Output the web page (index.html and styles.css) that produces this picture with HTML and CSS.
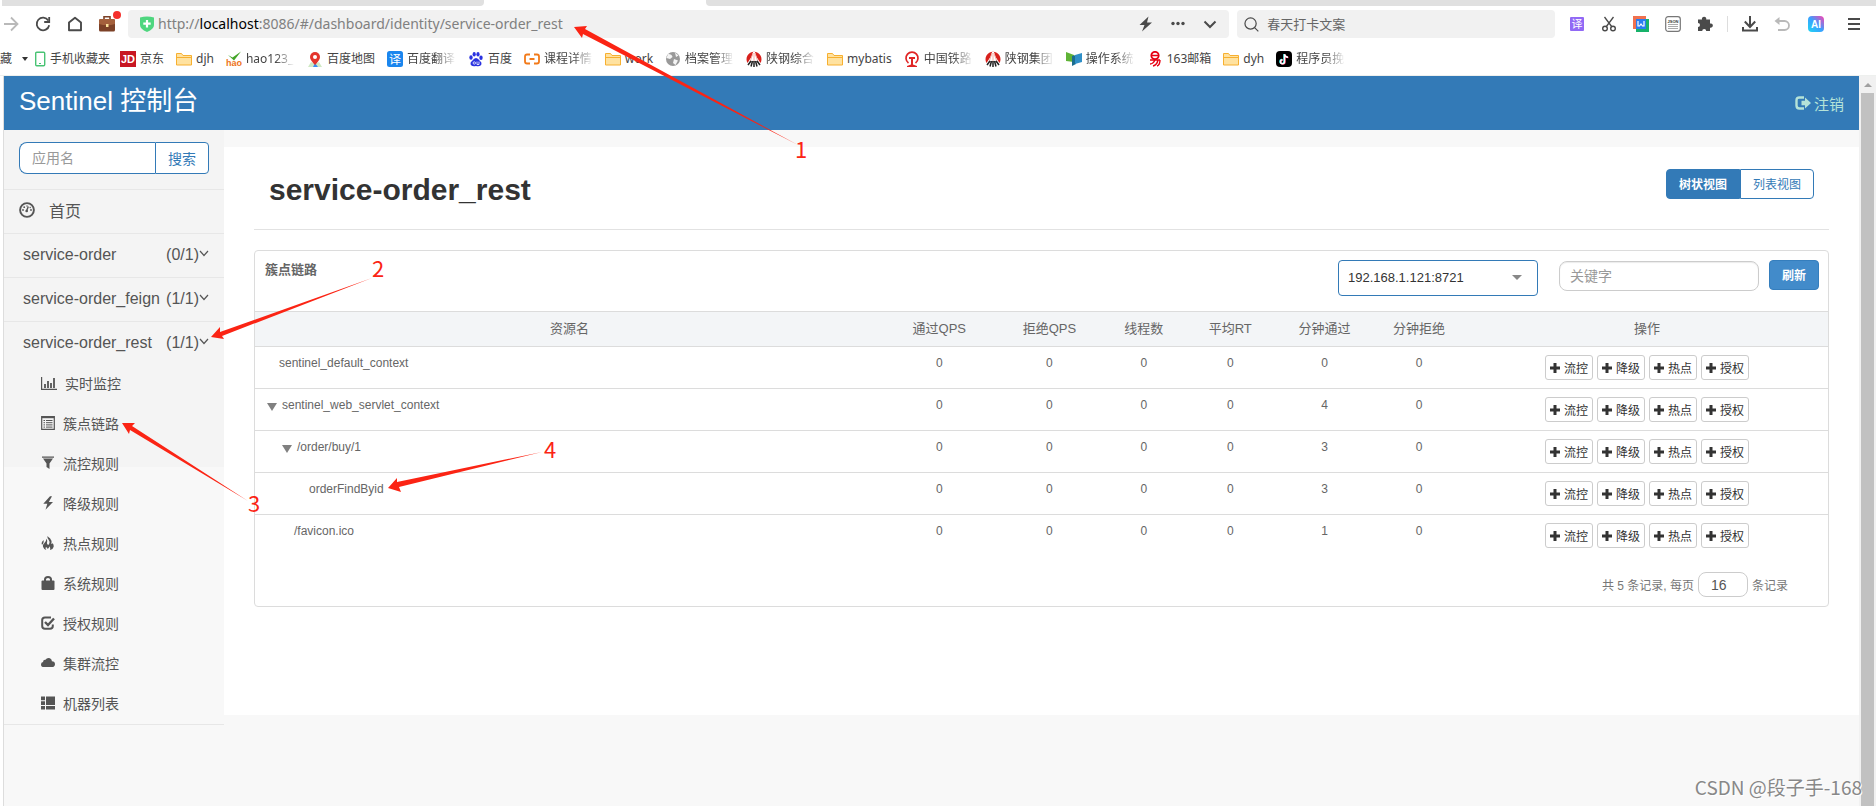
FILE: index.html
```html
<!DOCTYPE html>
<html lang="zh-CN">
<head>
<meta charset="utf-8">
<title>Sentinel 控制台</title>
<link rel="stylesheet" href="styles.css">
</head>
<body>
<svg class="defs" width="0" height="0" aria-hidden="true">
  <symbol id="folder" viewBox="0 0 16 16"><path d="M.5 2.500h5l1.500 2h8.500v9.500H.5z" fill="#ffe2a0" stroke="#f7b030"/><path d="M.5 6.500h15" stroke="#f7b030" fill="none"/></symbol>
  <symbol id="plus" viewBox="0 0 10 10"><path d="M3.500 0h3v3.500H10v3H6.500V10h-3V6.500H0v-3h3.500z" fill="#333"/></symbol>
  <symbol id="steel" viewBox="0 0 16 16"><path d="M1.500 12A7.500 7.500 0 1 1 14.500 12L10 5 9 1H7L6 5z" fill="#d8201c"/><path d="M7 2 4 11M8 2v9M9 2l3 9" stroke="#f6b0a8" fill="none"/><path d="m5 10-3 4M6.500 10 5 15.500M8 10v6M9.500 10l1.500 5.500M11 10l3 4" stroke="#222" stroke-width="1.500" fill="none"/></symbol>
  <symbol id="chev" viewBox="0 0 10 10"><path d="m1 2 4 4.500L9 2" fill="none" stroke="#555" stroke-width="1.200"/></symbol>
</svg>

<div class="tabstrip"><span class="tabs-left"></span><span class="tab-active"></span><span class="tabs-right"></span></div>

<div class="toolbar">
  <div class="tools">
    <button class="tool" aria-label="前进"><svg viewBox="0 0 16 16"><path d="M1 8h13M8 1.500 14.500 8 8 14.500" fill="none" stroke="#b9b9b9" stroke-width="1.800"/></svg></button>
    <button class="tool" aria-label="刷新"><svg viewBox="0 0 16 16"><path d="M13.300 4.500A6.300 6.300 0 1 0 14.200 9.200" fill="none" stroke="#4a4a4a" stroke-width="1.800"/><path d="M14.200 1v5H9.200" fill="none" stroke="#4a4a4a" stroke-width="1.800"/></svg></button>
    <button class="tool" aria-label="主页"><svg viewBox="0 0 16 16"><path d="M2 6.500 8 1.800l6 4.700v7.700H2z" fill="none" stroke="#4a4a4a" stroke-width="1.900" stroke-linejoin="round"/></svg></button>
    <button class="tool" aria-label="工具箱"><svg viewBox="0 0 16 16"><path d="M5 3V.8h6V3" fill="none" stroke="#7c4127" stroke-width="1.600"/><rect y="3" width="16" height="12.500" rx="1.500" fill="#7c4127"/><path d="M0 4.500Q0 3 1.500 3h13Q16 3 16 4.500V8Q8 10.500 0 8z" fill="#a4603c"/><rect x="7" y="8" width="2.500" height="3" fill="#fbe29a"/></svg><i class="dot"></i></button>
  </div>
  <div class="address" role="textbox" aria-label="地址">
    <svg class="shield" viewBox="0 0 14 16"><path d="M0 1.500Q7-.5 14 1.500V9q0 4-7 7-7-3-7-7z" fill="#4fd67f"/><path d="M7 4v7.500M3.300 7.700h7.400" stroke="#fff" stroke-width="2.200"/></svg>
    <span class="url">http://<b>localhost</b>:8086/#/dashboard/identity/service-order_rest</span>
    <button class="tool" aria-label="极速模式"><svg viewBox="0 0 16 16"><path d="m10.500.5-9 8.500h5L4 15.500l10-9H9z" fill="#4a4a4a"/></svg></button>
    <button class="tool" aria-label="更多"><svg viewBox="0 0 16 16"><g fill="#4a4a4a"><circle cx="3" cy="7.500" r="1.700"/><circle cx="8" cy="7.500" r="1.700"/><circle cx="13" cy="7.500" r="1.700"/></g></svg></button>
    <button class="tool" aria-label="展开"><svg viewBox="0 0 16 16"><path d="m2.500 5.500 5.500 5.500 5.500-5.500" fill="none" stroke="#4a4a4a" stroke-width="2"/></svg></button>
  </div>
  <label class="websearch">
    <svg viewBox="0 0 16 16"><circle cx="7" cy="7" r="6" fill="none" stroke="#4a4a4a" stroke-width="1.300"/><path d="m11.300 11.300 4 4" stroke="#4a4a4a" stroke-width="1.300"/></svg>
    <input type="text" value="春天打卡文案" aria-label="网页搜索">
  </label>
  <div class="tools tools-right">
    <button class="tool" aria-label="翻译"><svg viewBox="0 0 16 16"><rect x="1" y="1" width="14" height="14" rx="1" fill="#9169f5"/><text x="8" y="12" class="ico-cjk" font-size="11" fill="#fff">译</text></svg></button>
    <button class="tool" aria-label="截图"><svg viewBox="0 0 16 16"><path d="M3.500 1 11 11M12.500 1 5 11" stroke="#4a4a4a" stroke-width="1.300" fill="none"/><circle cx="4" cy="12.500" r="2.300" fill="none" stroke="#4a4a4a" stroke-width="1.400"/><circle cx="12" cy="12.500" r="2.300" fill="none" stroke="#4a4a4a" stroke-width="1.400"/></svg></button>
    <button class="tool" aria-label="文档"><svg viewBox="0 0 16 16"><path d="M0 0h13v13H0z" fill="#f0714f"/><path d="M3 3h13v13H3z" fill="#17b26a"/><path d="M3 3h10v10H3z" fill="#2a7cf0"/><path d="M5 5v5h1.500L8 8l1.500 2H11V5" fill="none" stroke="#fff" stroke-width="1.200"/></svg></button>
    <button class="tool" aria-label="JSON"><svg viewBox="0 0 16 16"><rect x=".7" y=".7" width="14.600" height="14.600" rx="2.500" fill="none" stroke="#777" stroke-width="1.200"/><text x="8" y="6.500" class="ico-txt" font-size="4" fill="#333">JSON</text><path d="M3 8.500h10M3 10.500h10M3 12.500h10" stroke="#aaa" stroke-width="1.200"/></svg></button>
    <button class="tool" aria-label="扩展"><svg viewBox="0 0 16 16"><path d="M1 3.500h4a2.200 2.200 0 1 1 4.200 0H13v4a2.200 2.200 0 1 1 0 4.200V15H9.200a2 2 0 1 0-4 0H1v-4a2 2 0 1 0 0-4z" fill="#4a4a4a"/></svg></button>
    <span class="sep"></span>
    <button class="tool" aria-label="下载"><svg viewBox="0 0 16 16"><path d="M8 0v11M2.800 5.500 8 11l5.200-5.500M1 11v3.500h14V11" fill="none" stroke="#4a4a4a" stroke-width="2"/></svg></button>
    <button class="tool" aria-label="恢复"><svg viewBox="0 0 16 16"><path d="M3 5h7.500a4.500 4.500 0 0 1 0 9H4" fill="none" stroke="#b9b9b9" stroke-width="1.800"/><path d="M5.500 1v8L.5 5z" fill="#b9b9b9"/></svg></button>
    <button class="tool ai" aria-label="AI 助手"><svg viewBox="0 0 16 16"><defs><linearGradient id="aig" x1="0" y1="1" x2="1" y2="0"><stop offset="0" stop-color="#1fd6f2"/><stop offset=".5" stop-color="#3aa0ff"/><stop offset="1" stop-color="#ff3fb0"/></linearGradient></defs><rect width="16" height="16" rx="4" fill="url(#aig)"/><text x="8" y="12" class="ico-txt" font-size="10" fill="#fff">AI</text></svg></button>
    <button class="tool menu" aria-label="菜单"><svg viewBox="0 0 16 16"><path d="M2 3h12M2 8h12M2 13h12" stroke="#4a4a4a" stroke-width="2"/></svg></button>
  </div>
</div>

<nav class="bookmarks" aria-label="书签">
  <span class="fav">藏</span><svg class="down" viewBox="0 0 6 4"><path d="M0 0h6L3 4z" fill="#333"/></svg>
  <a class="bm phone" href="#"><svg viewBox="2 0 12 16"><rect x="3.700" y="1.200" width="9" height="13.600" rx="1" fill="#fff" stroke="#49c374" stroke-width="1.400"/><path d="M7 12.500h2" stroke="#49c374"/></svg><span>手机收藏夹</span></a>
  <a class="bm" href="#"><svg viewBox="0 0 16 16"><path d="M0 0h16v16H0z" fill="#c81623"/><text x="8" y="12" class="ico-txt" font-size="11" fill="#fff">JD</text></svg><span>京东</span></a>
  <a class="bm" href="#"><svg><use href="#folder"/></svg><span>djh</span></a>
  <a class="bm" href="#"><svg viewBox="0 0 16 16"><path d="m2 4 4.500 2.500L15 .5 8 9.500z" fill="#43a528"/><text x="8" y="15" class="ico-txt" font-size="9" fill="#ee7320">hao</text></svg><span class="cut">hao123_</span></a>
  <a class="bm" href="#"><svg viewBox="0 0 16 16"><path d="m1 16 3-5 4 2 4-2 3 5z" fill="#cfe9c4"/><path d="m6 16 2-4 3 4z" fill="#3b8df2"/><path d="M8 14Q3 9 3 6a5 5 0 1 1 10 0q0 3-5 8" fill="#e4342b"/><circle cx="8" cy="6" r="2" fill="#fff"/></svg><span>百度地图</span></a>
  <a class="bm" href="#"><svg viewBox="0 0 16 16"><rect width="16" height="16" rx="2.500" fill="#1a86ee"/><text x="8" y="12.500" class="ico-cjk" font-size="12" fill="#fff">译</text></svg><span class="cut">百度翻译</span></a>
  <a class="bm" href="#"><svg viewBox="0 0 16 16"><g fill="#2a32e0"><ellipse cx="3" cy="6.500" rx="1.700" ry="2.200"/><ellipse cx="6.200" cy="3.200" rx="1.600" ry="2.200"/><ellipse cx="10" cy="3.200" rx="1.600" ry="2.200"/><ellipse cx="13" cy="6.800" rx="1.700" ry="2.200"/><path d="M8 7q2 0 3.500 2.500Q14 11 13.500 13.300 12.500 16 8 15q-4.500 1-5.500-1.700Q2 11 4.500 9.500 6 7 8 7"/></g><circle cx="6.300" cy="12" r="1.200" fill="none" stroke="#fff" stroke-width=".8"/><path d="M9 10.500v3h2v-3" fill="none" stroke="#fff" stroke-width=".8"/></svg><span>百度</span></a>
  <a class="bm" href="#"><svg viewBox="0 0 16 16"><path d="M6 3.500H3Q1 3.500 1 5.500v5q0 2 2 2h3M10 3.500h3q2 0 2 2v5q0 2-2 2h-3M5.500 8h5" fill="none" stroke="#f27a1a" stroke-width="1.800"/></svg><span class="cut">课程详情</span></a>
  <a class="bm" href="#"><svg><use href="#folder"/></svg><span>work</span></a>
  <a class="bm" href="#"><svg viewBox="0 0 16 16"><circle cx="8" cy="8" r="7" fill="#999"/><path d="M3 3q4 0 4.500 3L5 8 1.500 7zM9 8l4 1.500-2.500 4.500L8 12zM10 1.500l3.500 3L11 6z" fill="#f4f4f4"/></svg><span class="cut">档案管理</span></a>
  <a class="bm" href="#"><svg><use href="#steel"/></svg><span class="cut">陕钢综合</span></a>
  <a class="bm" href="#"><svg><use href="#folder"/></svg><span>mybatis</span></a>
  <a class="bm" href="#"><svg viewBox="0 0 16 16"><path d="M4.500 12A6 6 0 1 1 11.500 12" fill="none" stroke="#e02424" stroke-width="1.700"/><path d="M5 6h6v2H9v5.500l4 1.500v1H3v-1l4-1.500V8H5z" fill="#e02424"/></svg><span class="cut">中国铁路</span></a>
  <a class="bm" href="#"><svg><use href="#steel"/></svg><span class="cut">陕钢集团</span></a>
  <a class="bm" href="#"><svg viewBox="0 0 16 16"><path d="m0 1 8 3v7L0 10z" fill="#5fb336"/><path d="m6 5 4-1v9l-4 2z" fill="#1b6d8f"/><path d="m9 4 7-2v9l-7 2z" fill="#2f8fc8"/></svg><span class="cut">操作系统</span></a>
  <a class="bm" href="#"><svg viewBox="0 0 16 16"><circle cx="8" cy="4.500" r="3.700" fill="none" stroke="#e60012" stroke-width="1.800"/><path d="M5 4.500h6M3 9h10M3 13q3 0 5-4M6 15q4-1 5-6M10 15q3-1 3-6" fill="none" stroke="#e60012" stroke-width="1.400"/></svg><span>163邮箱</span></a>
  <a class="bm" href="#"><svg><use href="#folder"/></svg><span>dyh</span></a>
  <a class="bm" href="#"><svg viewBox="0 0 16 16"><rect width="16" height="16" rx="4" fill="#000"/><g fill="none" stroke-width="1.500"><path d="M8 3v7.500a2 2 0 1 1-2-2M8 3q.5 3 3.500 3" stroke="#25f4ee"/><path d="M9 3.500V11a2 2 0 1 1-2-2M9 3.500q.5 3 3.500 3" stroke="#fe2c55"/><path d="M8.500 3.200v7.600a2 2 0 1 1-2-2M8.500 3.200q.5 3 3.500 3" stroke="#fff"/></g></svg><span class="cut">程序员挽</span></a>
</nav>

<div class="viewport">
  <div class="page">
    <header class="navbar">
      <a class="brand" href="#">Sentinel 控制台</a>
      <a class="logout" href="#"><svg viewBox="0 0 16 14"><path d="M9 1.500H4.500Q1.500 1.500 1.500 4.500v5q0 3 3 3H9" fill="none" stroke="currentColor" stroke-width="2.400"/><path d="M6.500 4.800H10V1.500l6 5.500-6 5.500V9.200H6.500z" fill="currentColor"/></svg>注销</a>
    </header>
    <div class="columns">
      <aside class="sidebar">
        <form class="appsearch">
          <input type="text" placeholder="应用名" aria-label="应用名">
          <button type="button">搜索</button>
        </form>
        <a class="side-item home" href="#"><svg viewBox="0 0 16 16"><circle cx="8" cy="8" r="6.900" fill="none" stroke="#555" stroke-width="1.900"/><path d="m7.300 9.500 2-5" stroke="#555" stroke-width="1.400"/><circle cx="7.700" cy="9" r="1.300" fill="#555"/><g fill="#555"><circle cx="4" cy="8" r=".9"/><circle cx="5.200" cy="5.200" r=".9"/><circle cx="8" cy="4" r=".7"/><circle cx="12" cy="8" r=".9"/><circle cx="11.200" cy="5.500" r=".7"/></g></svg>首页</a>
        <a class="side-item" href="#">service-order<span class="count">(0/1)</span><svg class="chev"><use href="#chev"/></svg></a>
        <a class="side-item" href="#">service-order_feign<span class="count">(1/1)</span><svg class="chev"><use href="#chev"/></svg></a>
        <a class="side-item" href="#">service-order_rest<span class="count">(1/1)</span><svg class="chev"><use href="#chev"/></svg></a>
        <ul class="submenu">
          <li><a href="#"><svg class="wide" viewBox="0 0 16 14"><path d="M.6 1v12.400H16" fill="none" stroke="#555" stroke-width="1.200"/><path d="M4 12V8M7 12V5M10 12V7M13 12V2" stroke="#555" stroke-width="1.800"/></svg>实时监控</a></li>
          <li><a href="#"><svg viewBox="0 0 14 14"><path d="M.7.7h12.600v12.600H.7z" fill="none" stroke="#555" stroke-width="1.200"/><path d="M.5 1.200h13" stroke="#555" stroke-width="2"/><path d="M2.500 4.500H4M2.500 6.700H4M2.500 8.900H4M2.500 11.100H4M5 4.500h6.500M5 6.700h6.500M5 8.900h6.500M5 11.100h6.500" stroke="#555"/></svg>簇点链路</a></li>
          <li><a href="#"><svg viewBox="0 0 14 14"><path d="M1 .5h12v1.300H1zM2 2.500h10L8.500 7.500V13L5.500 11V7.500z" fill="#555"/></svg>流控规则</a></li>
          <li><a href="#"><svg viewBox="0 0 14 14"><path d="M9 .3 2.300 7.800h4L4.500 13.800 12 6H7.800L11 .3z" fill="#555"/></svg>降级规则</a></li>
          <li><a href="#"><svg viewBox="0 0 14 14"><path d="M6.500 0Q6 2 7.600 3.800 9.400 6 8 8.200 7 9.300 6.300 8.300 5.600 7 6.200 5.400 6.300 3.800 5.400 2.800 5.300 5 3.800 6.500 1.600 8.500 2 10.800 2.700 13.300 5.300 14 4 12.300 4.900 10.900 6.300 11.500 6.700 13 8.300 12 8.200 10.300 9.900 11.800 9 14q3.200-.7 3.700-3.300.3-2.200-1.200-3.700Q11.300 8.300 10.400 8 11 4 9 2.200 7.500 1.200 6.500 0M2.600 4Q.2 5.800.6 8q.8 1.200 1.500-.3.900-1.700.5-3.700" fill="#555"/></svg>热点规则</a></li>
          <li><a href="#"><svg viewBox="0 0 14 14"><path d="M4 6V3.500Q4 1 7 1t3 2.500V6" fill="none" stroke="#555" stroke-width="2"/><rect x=".5" y="4.500" width="13" height="9.500" rx="1" fill="#555"/></svg>系统规则</a></li>
          <li><a href="#"><svg viewBox="0 0 14 14"><path d="M10 1.500H4Q1.200 1.500 1.200 4v6q0 2.800 2.800 2.800h5q2.800 0 2.800-2.800V8.500" fill="none" stroke="#555" stroke-width="2"/><path d="m4 6 3 3 6-6.500" fill="none" stroke="#555" stroke-width="2.400"/></svg>授权规则</a></li>
          <li><a href="#"><svg viewBox="0 0 14 14"><path d="M3 11Q0 11 0 8.400 0 6.300 2 6 2.200 3.500 4.500 3.800 5.500 2 7.600 2q2.900.2 3.300 3.200Q14 5.300 14 8.200 13.800 11 11 11z" fill="#555"/></svg>集群流控</a></li>
          <li><a href="#"><svg viewBox="0 0 14 14"><path d="M0 .5h4v3.700H0zM0 5.200h4v3.700H0zM0 9.900h4v3.700H0zM5 .5h9v8.400H5zM5 9.900h9v3.700H5z" fill="#555"/></svg>机器列表</a></li>
        </ul>
      </aside>

      <main class="content">
        <div class="title-row">
          <h1>service-order_rest</h1>
          <div class="toggle"><button class="on">树状视图</button><button>列表视图</button></div>
        </div>
        <section class="card">
          <div class="card-head">
            <h2>簇点链路</h2>
            <div class="picker">
              <select aria-label="机器"><option>192.168.1.121:8721</option></select>
              <svg viewBox="0 0 10 5"><path d="M0 0h10L5 5z" fill="#888"/></svg>
            </div>
            <input class="keyword" type="text" placeholder="关键字" aria-label="关键字">
            <button class="refresh">刷新</button>
          </div>
          <table>
            <colgroup><col class="c-name"><col class="c7"><col class="c7"><col class="c5"><col class="c6"><col class="c6"><col class="c6"><col class="c-ops"></colgroup>
            <thead><tr><th>资源名</th><th>通过QPS</th><th>拒绝QPS</th><th>线程数</th><th>平均RT</th><th>分钟通过</th><th>分钟拒绝</th><th>操作</th></tr></thead>
            <tbody>
              <tr><td class="name in-24">sentinel_default_context</td><td>0</td><td>0</td><td>0</td><td>0</td><td>0</td><td>0</td><td><div class="ops"><button><svg><use href="#plus"/></svg>流控</button><button><svg><use href="#plus"/></svg>降级</button><button><svg><use href="#plus"/></svg>热点</button><button><svg><use href="#plus"/></svg>授权</button></div></td></tr>
              <tr><td class="name in-12"><i class="tri"></i>sentinel_web_servlet_context</td><td>0</td><td>0</td><td>0</td><td>0</td><td>4</td><td>0</td><td><div class="ops"><button><svg><use href="#plus"/></svg>流控</button><button><svg><use href="#plus"/></svg>降级</button><button><svg><use href="#plus"/></svg>热点</button><button><svg><use href="#plus"/></svg>授权</button></div></td></tr>
              <tr><td class="name in-27"><i class="tri"></i>/order/buy/1</td><td>0</td><td>0</td><td>0</td><td>0</td><td>3</td><td>0</td><td><div class="ops"><button><svg><use href="#plus"/></svg>流控</button><button><svg><use href="#plus"/></svg>降级</button><button><svg><use href="#plus"/></svg>热点</button><button><svg><use href="#plus"/></svg>授权</button></div></td></tr>
              <tr><td class="name in-54">orderFindByid</td><td>0</td><td>0</td><td>0</td><td>0</td><td>3</td><td>0</td><td><div class="ops"><button><svg><use href="#plus"/></svg>流控</button><button><svg><use href="#plus"/></svg>降级</button><button><svg><use href="#plus"/></svg>热点</button><button><svg><use href="#plus"/></svg>授权</button></div></td></tr>
              <tr><td class="name in-39">/favicon.ico</td><td>0</td><td>0</td><td>0</td><td>0</td><td>1</td><td>0</td><td><div class="ops"><button><svg><use href="#plus"/></svg>流控</button><button><svg><use href="#plus"/></svg>降级</button><button><svg><use href="#plus"/></svg>热点</button><button><svg><use href="#plus"/></svg>授权</button></div></td></tr>
            </tbody>
          </table>
          <div class="pager"><span>共 5 条记录, 每页</span><input type="text" value="16" aria-label="每页条数"><span>条记录</span></div>
        </section>
      </main>
    </div>
  </div>
  <div class="scrollbar" aria-hidden="true"><svg viewBox="0 0 8 4"><path d="M0 4h8L4 0z" fill="#a0a0a0"/></svg><span class="thumb"></span></div>
</div>

<svg class="notes" width="1876" height="806" viewBox="0 0 1876 806">
  <g fill="#fb2414">
    <path d="M574 27l13-1-2 3 213 116L583 34l-1 4z"/>
    <path d="M211 337l9-10v5l152-54-150 58 2 3z"/>
    <path d="M122 423l13 0-3 3 116 75-118-71-1 4z"/>
    <path d="M388 488l9-10v4l145-30-143 35 2 5z"/>
    <text x="795" y="158">1</text><text x="372" y="277">2</text><text x="248" y="512">3</text><text x="544" y="458">4</text>
  </g>
</svg>
<div class="watermark">CSDN @段子手-168</div>
</body>
</html>
```
FILE: styles.css
```css
* { box-sizing: border-box; }

body {
  margin: 0;
  height: 100vh;
  display: flex;
  flex-direction: column;
  overflow: hidden;
  background: #fff;
  color: #555;
  font-family: "Liberation Sans", "Noto Sans CJK SC", sans-serif;
  font-size: 14px;
}
a { color: inherit; text-decoration: none; }
button, input, select { font-family: inherit; margin: 0; }
button { background: none; border: 0; padding: 0; color: inherit; cursor: pointer; }
svg { display: block; flex: none; }
.defs { position: absolute; }
.ico-txt { font-family: "Liberation Sans", sans-serif; font-weight: bold; text-anchor: middle; }
.ico-cjk { font-family: "Noto Sans CJK SC", sans-serif; text-anchor: middle; }

/* browser chrome */
.tabstrip { display: flex; height: 6px; flex: none; margin-left: 2px; }
.tabs-left { flex: 482; background: #e0e0e0; border-bottom-right-radius: 4px; }
.tab-active { flex: 222; }
.tabs-right { flex: 1170; background: #e0e0e0; border-bottom-left-radius: 4px; }

.toolbar { display: flex; align-items: center; flex: none; height: 36px; padding: 0 14px 0 3px; }
.tools { display: flex; align-items: center; gap: 16px; }
.tools-right { margin-left: 14px; }
.tool { position: relative; width: 16px; height: 16px; }
.tool svg { width: 16px; height: 16px; }
.dot { position: absolute; top: -5px; right: -6px; width: 8px; height: 8px; border-radius: 50%; background: #f5302c; }
.sep { width: 1px; height: 16px; background: #ddd; margin: 0 -2px; }
.tool.ai { margin-left: 2px; }
.tool.menu { margin-left: 6px; }
.address, .websearch { display: flex; align-items: center; height: 28px; background: #f1f1f1; border-radius: 4px; }
.address { flex: 1079; margin-left: 13px; padding: 0 11px 0 12px; gap: 16px; }
.shield { width: 14px; height: 16px; margin-right: -12px; }
.url { flex: 1; font: 14px/28px "Noto Sans", sans-serif; color: #808080; white-space: nowrap; }
.url b { color: #000; font-weight: normal; }
.websearch { flex: 304; margin-left: 8px; padding: 0 7px; gap: 8px; }
.websearch svg { width: 15px; height: 15px; }
.websearch input { flex: 1; min-width: 0; border: 0; padding: 0 0 2px; background: none; font-size: 13px; color: #666; outline: 0; }

.bookmarks {
  display: flex; align-items: center; flex: none; height: 34px; gap: 12px;
  border-bottom: 1px solid #eef0ee; font: 12px/18px "Noto Sans", "Noto Sans CJK SC", sans-serif; color: #444; white-space: nowrap;
}
.fav { margin-right: -2px; }
.down { width: 6px; height: 4px; margin-right: -6px; }
.bm { display: flex; align-items: center; gap: 4px; }
.bm svg { width: 16px; height: 16px; }
.phone { margin-right: -2px; }
.phone svg { width: 12px; }
.cut {
  width: 49px; overflow: hidden;
  -webkit-mask-image: linear-gradient(90deg, #000 60%, transparent);
  mask-image: linear-gradient(90deg, #000 60%, transparent);
}

/* web page */
.viewport { display: flex; flex: 1; min-height: 0; margin-left: 3px; border-left: 1px solid #ddd; }
.page { flex: 1; min-width: 0; overflow: hidden; background: #f8f8f8; }
.scrollbar { width: 17px; flex: none; background: #f1f1f1; display: flex; flex-direction: column; align-items: center; padding-top: 7px; gap: 6px; }
.scrollbar svg { width: 8px; height: 4px; }
.thumb { flex: 1; width: 13px; background: #c1c1c1; }

.navbar { display: flex; justify-content: space-between; align-items: center; height: 54px; padding: 0 15px; background: #337ab7; }
.brand { color: #fff; font-size: 26px; line-height: 46px; padding-bottom: 4px; }
.logout { display: flex; align-items: center; gap: 3px; color: #b5e3d8; font-size: 15px; }
.logout svg { width: 16px; height: 14px; }

.columns { display: flex; align-items: flex-start; }
.sidebar { width: 220px; flex: none; border-bottom: 1px solid #e7e7e7; background: linear-gradient(#f4f4f4 337px, #f8f8f8 337px); }
.appsearch { display: flex; padding: 12px 15px 15px; height: 59px; }
.appsearch input {
  flex: 1; min-width: 0; height: 32px; padding: 0 12px; border: 1px solid #337ab7; border-right: 0;
  border-radius: 8px 0 0 8px; font-size: 14px; background: #fff; color: #555;
}
.appsearch button { width: 54px; height: 32px; border: 1px solid #337ab7; border-radius: 0 4px 4px 0; background: #fff; color: #337ab7; font-size: 14px; }
input::placeholder { color: #999; opacity: 1; }
.side-item { display: flex; align-items: center; height: 44px; padding: 0 15px 2px 19px; border-top: 1px solid #e7e7e7; font-size: 16px; color: #555; }
.home { padding: 0 15px 4px; gap: 14px; }
.home svg { width: 16px; height: 16px; }
.count { margin-left: auto; }
.chev { width: 10px; height: 10px; margin-bottom: 2px; }
.submenu { list-style: none; margin: -1px 0 0; padding: 0; }
.submenu a { display: flex; align-items: center; gap: 8px; height: 40px; padding: 0 0 2px 37px; font-size: 14px; color: #555; }
.submenu svg { width: 14px; height: 14px; }
.submenu svg.wide { width: 16px; }

.content { flex: 1; min-width: 0; min-height: 568px; margin-top: 17px; padding: 0 30px; background: #fff; }
.title-row { display: flex; justify-content: space-between; align-items: flex-start; height: 83px; padding: 22px 15px 0 15px; border-bottom: 1px solid #e2e2e2; }
h1 { margin: 3px 0 0; font-size: 30px; line-height: 36px; color: #333; }
.toggle { display: flex; }
.toggle button { width: 74px; height: 30px; padding-bottom: 2px; border: 1px solid #337ab7; border-radius: 0 4px 4px 0; font-size: 12px; color: #337ab7; background: #fff; }
.toggle .on { border-radius: 4px 0 0 4px; background: #337ab7; color: #fff; font-weight: bold; }

.card { margin-top: 20px; border: 1px solid #dcdcdc; border-radius: 4px; }
.card-head { display: flex; align-items: flex-start; height: 60px; padding: 9px 9px 0 10px; }
h2 { margin: 0 auto 0 0; font-size: 13px; line-height: 20px; color: #666; }
.picker { position: relative; width: 200px; margin-right: 21px; }
.picker select { appearance: none; width: 100%; height: 36px; padding: 0 30px 2px 9px; border: 1px solid #337ab7; border-radius: 4px; background: #fff; color: #333; font-size: 13px; }
.picker svg { position: absolute; right: 16px; top: 15px; width: 10px; height: 5px; }
.keyword { width: 200px; height: 30px; margin: 1px 10px 0 0; padding: 0 10px; border: 1px solid #ccc; border-radius: 8px; box-shadow: inset 0 1px 1px rgba(0, 0, 0, .08); font-size: 14px; }
.refresh { width: 50px; height: 30px; padding-bottom: 2px; border: 1px solid #357ebd; border-radius: 4px; background: #428bca; color: #fff; font-size: 12px; font-weight: bold; }

table { width: 100%; table-layout: fixed; border-spacing: 0; color: #666; font-size: 12px; line-height: 16px; }
.c-name { width: 40%; }
.c7 { width: 7%; }
.c5 { width: 5%; }
.c6 { width: 6%; }
.c-ops { width: 23%; }
th { height: 36px; padding: 0; background: #f3f5f7; border: solid #dcdcdc; border-width: 1px 0; font-size: 13px; font-weight: normal; }
td { height: 42px; padding: 8px 0; border-bottom: 1px solid #dcdcdc; text-align: center; vertical-align: top; }
tbody tr:last-child td { border-bottom: 0; }
.name { text-align: left; }
.in-12 { padding-left: 12px; }
.in-24 { padding-left: 24px; }
.in-27 { padding-left: 27px; }
.in-39 { padding-left: 39px; }
.in-54 { padding-left: 54px; }
.tri { display: inline-block; margin-right: 5px; border: solid transparent; border-width: 8px 5px 0; border-top-color: #808080; vertical-align: -2px; }
.ops { display: flex; justify-content: center; gap: 4px; }
.ops button { display: flex; align-items: center; gap: 4px; height: 25px; padding: 0 4px; border: 1px solid #ccc; border-radius: 3px; background: #fff; color: #333; font-size: 12px; }
.ops svg { width: 10px; height: 10px; }
.pager { display: flex; align-items: center; justify-content: flex-end; gap: 4px; height: 49px; padding: 6px 40px 0 0; color: #777; font-size: 12px; }
.pager input { width: 50px; height: 25px; padding: 0 12px; border: 1px solid #ccc; border-radius: 8px; background: #fff; color: #555; font-size: 14px; }

/* annotations drawn over the page */
.notes { position: absolute; left: 0; top: 0; pointer-events: none; }
.notes text { font: 22px "Noto Sans CJK SC", sans-serif; }
.watermark { position: absolute; right: 14px; bottom: 5px; font: 19px/28px "Noto Sans CJK SC", sans-serif; color: #888; text-shadow: 1px 1px 0 #fff; }
```
